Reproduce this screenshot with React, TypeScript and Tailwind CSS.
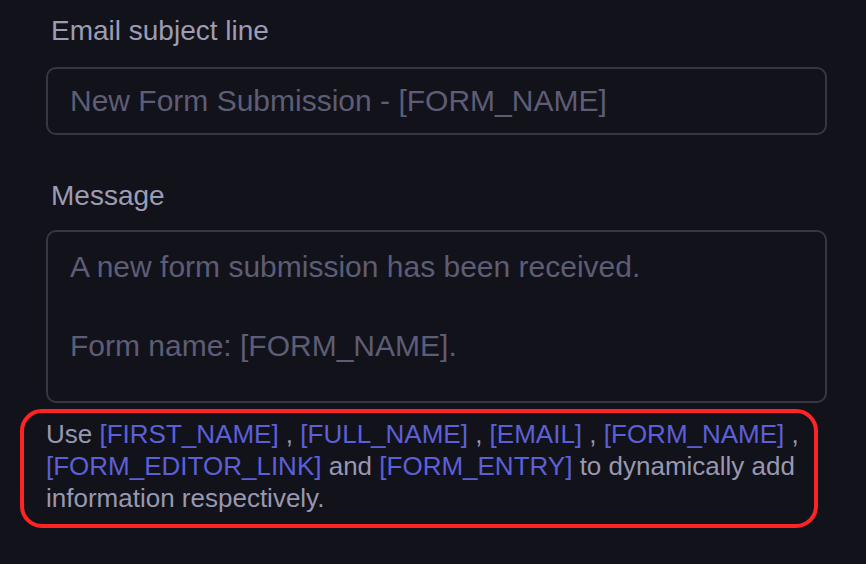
import React from "react";

const tokens = ["[FIRST_NAME]", "[FULL_NAME]", "[EMAIL]", "[FORM_NAME]"];

function Token({ children }: { children: React.ReactNode }) {
  return <span className="text-[#5c60d8]">{children}</span>;
}

export default function App() {
  return (
    <div
      className="w-[866px] h-[564px] bg-[#12121b] pl-[46px] pr-[39px] pt-[14px] flex flex-col"
      style={{ fontFamily: '"Liberation Sans", Arial, sans-serif' }}
    >
      <label className="text-[28px] leading-[34px] text-[#9c9cb4] pl-[5px]">
        Email subject line
      </label>
      <input
        className="mt-[19px] h-[68px] w-full rounded-[10px] border-2 border-[#363646] bg-transparent px-[22px] text-[30px] text-[#9c9cb4] outline-none placeholder:text-[#5d5d75]"
        placeholder="New Form Submission - [FORM_NAME]"
      />

      <label className="mt-[44px] text-[28px] leading-[34px] text-[#9c9cb4] pl-[5px]">
        Message
      </label>
      <textarea
        className="mt-[17px] h-[173px] w-full resize-none rounded-[10px] border-2 border-[#363646] bg-transparent px-[22px] pt-[15px] text-[30px] leading-[39.5px] text-[#9c9cb4] outline-none placeholder:text-[#5d5d75]"
        placeholder={"A new form submission has been received.\n\nForm name: [FORM_NAME]."}
      />

      <div className="mt-[6px] -ml-[26px] w-[798px] rounded-[22px] border-4 border-[#ff2424] pl-[22px] pr-[12px] pt-[5px] pb-[10px] text-[26px] leading-[32px] text-[#9898b0]">
        Use{" "}
        {tokens.map((t) => (
          <React.Fragment key={t}>
            <Token>{t}</Token> ,{" "}
          </React.Fragment>
        ))}
        <Token>[FORM_EDITOR_LINK]</Token> and <Token>[FORM_ENTRY]</Token> to
        dynamically add information respectively.
      </div>
    </div>
  );
}
